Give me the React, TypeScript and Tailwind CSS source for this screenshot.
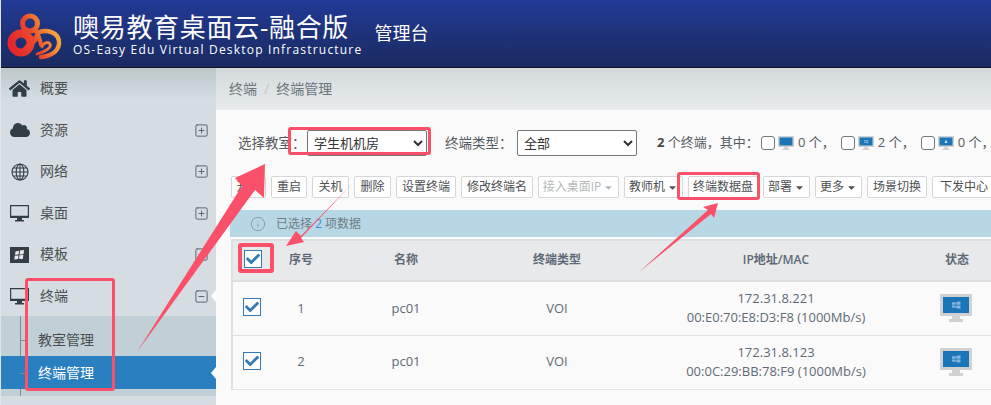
import { FaHome, FaCloud, FaCheck, FaCaretDown } from "react-icons/fa";
import { SquarePlus, SquareMinus, Info } from "lucide-react";
import type { ReactNode } from "react";

const Logo = () => (
  <svg width="66" height="67" viewBox="1 0 66 67" className="shrink-0">
    <defs>
      <linearGradient id="lg" gradientUnits="userSpaceOnUse" x1="12" y1="46" x2="58" y2="24">
        <stop offset="0" stopColor="#e3262c" />
        <stop offset="0.45" stopColor="#ec4a2c" />
        <stop offset="0.72" stopColor="#f28a34" />
        <stop offset="1" stopColor="#f8b545" />
      </linearGradient>
    </defs>
    <g fill="none" stroke="url(#lg)" strokeLinecap="round">
      <circle cx="30" cy="23.5" r="7.5" strokeWidth="5" />
      <circle cx="21" cy="43" r="9.5" strokeWidth="8" />
      <path d="M25 50 L37 37" strokeWidth="6" />
      <path d="M24 29 L30 39" strokeWidth="5" />
      <path d="M37 33 C45 29 60 31 59 44 C58 52 50 56 41 57" strokeWidth="4.5" />
      <path d="M35 30 C38 34 40 38 41 45" strokeWidth="4" />
      <path d="M37 54 C44 52 52 48 50 44 C48 41 43 43 42 47" strokeWidth="2.8" />
    </g>
  </svg>
);

const GlobeIcon = () => (
  <svg width="18" height="18" viewBox="0 0 18 18" fill="none" stroke="#323e46" strokeWidth="1.1">
    <circle cx="9" cy="9" r="8" />
    <ellipse cx="9" cy="9" rx="3.8" ry="8" />
    <path d="M9 1v16M1 9h16M2.2 5h13.6M2.2 13h13.6" />
  </svg>
);

const TemplateIcon = () => (
  <svg width="19" height="16" viewBox="0 0 19 16">
    <rect x="0.75" y="0.75" width="17.5" height="14.5" fill="#3a3f44" stroke="#323e46" strokeWidth="1.5" />
    <path d="M5.5 4.5 9 3.8 8.6 7.5 5 7.8ZM10 3.6 14 2.9 13.5 7.2 9.6 7.5ZM4.8 8.7 8.5 8.4 8.1 12 4.3 12.4ZM9.5 8.3 13.3 8.1 12.8 12 9 11.8Z" fill="#e8ecee" />
  </svg>
);

const MonitorOutline = () => (
  <svg width="19" height="17" viewBox="0 0 19 17">
    <path d="M0 0h19v13H0ZM1.2 1.2v9.6h16.6V1.2Z" fill="#323e46" fillRule="evenodd" />
    <path d="M7 13h5v2h2v1.5H5V15h2Z" fill="#323e46" />
  </svg>
);

type NavItem = { label: string; icon: ReactNode; mark?: "plus" | "minus"; notch?: boolean };

const NAV: NavItem[] = [
  { label: "概要", icon: <FaHome size={21} color="#323e46" /> },
  { label: "资源", icon: <FaCloud size={20} color="#323e46" />, mark: "plus" },
  { label: "网络", icon: <GlobeIcon />, mark: "plus" },
  { label: "桌面", icon: <MonitorOutline />, mark: "plus" },
  { label: "模板", icon: <TemplateIcon />, mark: "plus" },
  { label: "终端", icon: <MonitorOutline />, mark: "minus", notch: true },
];

const Notch = () => (
  <span className="absolute right-0 top-1/2 -translate-y-1/2 border-y-[6px] border-r-[5px] border-y-transparent border-r-white" />
);

const Sidebar = () => (
  <aside className="w-[215px] shrink-0 bg-[linear-gradient(#bdc8cb_0px,#d5dde2_32px)] text-[14px] text-[#4a4f52]">
    {NAV.map((n) => (
      <div key={n.label} className="relative flex h-[41.5px] items-center">
        <span className="flex w-[38px] justify-center pr-[1px]">{n.icon}</span>
        <span className="ml-[1px] flex-1 pb-[2px]">{n.label}</span>
        {n.mark === "plus" && <SquarePlus size={15} color="#555f64" strokeWidth={1.5} className="mr-[7px]" />}
        {n.mark === "minus" && <SquareMinus size={15} color="#555f64" strokeWidth={1.5} className="mr-[7px]" />}
        {n.notch && <Notch />}
      </div>
    ))}
    <div className="relative -mt-px bg-[#c1d0d6] py-[7px]">
      <span className="absolute bottom-0 left-[19px] top-0 w-px bg-[#7d8a90]" />
      <div className="relative flex h-[33px] items-center pl-[37px] text-[#4a4f52]">
        <span className="absolute left-[19px] top-1/2 h-px w-[5px] bg-[#7d8a90]" />
        教室管理
      </div>
      <div className="relative flex h-[33px] items-center bg-[#2a7fc0] pl-[37px] text-white">
        <span className="absolute left-[19px] top-1/2 h-px w-[5px] bg-[#7d8a90]" />
        终端管理
        <Notch />
      </div>
    </div>
  </aside>
);

const Monitor = ({ screen, width, glyph }: { screen: string; width: number; glyph?: ReactNode }) => (
  <svg width={width} viewBox="0 0 32 29" className="shrink-0">
    <rect x="0" y="0" width="32" height="22" fill="#cfd1d2" />
    <rect x="3" y="3" width="26" height="16" fill={screen} />
    <path d="M12 22h8v3h3v3H9v-3h3Z" fill="#cfd1d2" />
    {glyph}
  </svg>
);

const Win = <path d="M12 8.5 15.5 8v2.7H12ZM16.2 7.9 20.5 7.3v3.4h-4.3ZM12 11.4h3.5v2.7L12 13.6ZM16.2 11.4h4.3v3.4l-4.3-.6Z" fill="#7fb5e0" />;

const Box = () => <span className="h-[14px] w-[14px] rounded-[3px] border border-[#777] bg-white" />;

const Check = ({ className = "" }: { className?: string }) => (
  <span className={`flex h-[18px] w-[18px] items-center justify-center border border-[#337ab7] bg-white ${className}`}>
    <FaCheck size={14} color="#337ab7" />
  </span>
);

const Btn = ({ children, w, off, caret }: { children: ReactNode; w: string; off?: boolean; caret?: boolean }) => (
  <span
    className={`flex h-[22px] shrink-0 items-center justify-center gap-[2px] rounded-[2px] border border-[#d4d6d8] bg-white text-[12px] ${off ? "text-[#b4b8bb]" : "text-[#4c4f52]"} ${w}`}
  >
    {children}
    {caret && <FaCaretDown size={11} />}
  </span>
);

const Select = ({ value, w }: { value: string; w: string }) => (
  <select defaultValue={value} className={`h-[26px] shrink-0 rounded-[2px] border border-[#767676] bg-white pl-[2px] text-[13px] text-[#333] ${w}`}>
    <option>{value}</option>
  </select>
);

const Stat = ({ n, screen, glyph }: { n: number; screen: string; glyph?: ReactNode }) => (
  <span className="flex shrink-0 items-center gap-[3px] whitespace-nowrap">
    <Box />
    <Monitor screen={screen} width={16} glyph={glyph} />
    <span className="ml-[1px]">{n} 个，</span>
  </span>
);

const ROWS = [
  { id: 1, ip: "172.31.8.221", mac: "00:E0:70:E8:D3:F8 (1000Mb/s)" },
  { id: 2, ip: "172.31.8.123", mac: "00:0C:29:BB:78:F9 (1000Mb/s)" },
];

const Table = () => (
  <table className="ml-[15px] mt-[2px] w-[765px] table-fixed border-collapse border-l-2 border-[#dfe1e3] text-center text-[13px] text-[#5f6a76]">
    <colgroup>
      <col className="w-[41px]" />
      <col className="w-[56px]" />
      <col className="w-[154px]" />
      <col className="w-[148px]" />
      <col className="w-[290px]" />
      <col className="w-[76px]" />
    </colgroup>
    <thead>
      <tr className="h-[41px] border-y-2 border-[#dcdfe1] bg-[#e7e9eb] text-[12px] font-semibold">
        <th className="p-0"><Check className="ml-[11px] -mt-[3px]" /></th>
        <th className="p-0 pb-[2px] font-semibold">序号</th>
        <th className="p-0 pb-[2px] font-semibold">名称</th>
        <th className="p-0 pb-[2px] font-semibold">终端类型</th>
        <th className="p-0 pb-[2px] font-semibold">IP地址/MAC</th>
        <th className="p-0 pb-[2px] pr-[4px] font-semibold">状态</th>
      </tr>
    </thead>
    <tbody>
      {ROWS.map((r) => (
        <tr key={r.id} className="h-[54px] border-b border-[#dfe1e3]">
          <td className="p-0"><Check className="ml-[10px] -mt-[2px]" /></td>
          <td className="p-0">{r.id}</td>
          <td className="p-0">pc01</td>
          <td className="p-0">VOI</td>
          <td className="p-0 leading-[19px]">
            <div>{r.ip}</div>
            <div>{r.mac}</div>
          </td>
          <td className="p-0 pr-[6px]">
            <div className="flex justify-center"><Monitor screen="#1a76b8" width={32} glyph={Win} /></div>
          </td>
        </tr>
      ))}
    </tbody>
  </table>
);

const Main = () => (
  <main className="min-w-0 flex-1 overflow-hidden bg-[#fafafa] text-[13px] text-[#555c63]">
    <div className="flex h-[42px] items-center gap-[7px] bg-gradient-to-b from-[#d3d9db] to-[#e8ecee] pb-[2px] pl-[13px] text-[14px] text-[#6b747a]">
      <span>终端</span>
      <span className="text-[#c3c8cb]">/</span>
      <span>终端管理</span>
    </div>
    <div className="mt-[20px] flex h-[26px] items-center whitespace-nowrap pl-[22px]">
      <span className="w-[69px] shrink-0 text-[13.5px]">选择教室：</span>
      <Select value="学生机机房" w="w-[120px]" />
      <span className="ml-[18px] w-[72px] shrink-0 text-[13.5px]">终端类型：</span>
      <Select value="全部" w="w-[120px]" />
      <span className="ml-[20px] w-[104px] shrink-0"><b className="text-[#444]">2</b> 个终端，其中：</span>
      <span className="flex shrink-0 gap-[6px]">
        <Stat n={0} screen="#1a76b8" />
        <Stat n={2} screen="#1a76b8" glyph={Win} />
        <Stat n={0} screen="#1a76b8" glyph={<path d="M16 7l3 7h-6Z" fill="#cfe3f3" />} />
      </span>
    </div>
    <div className="mt-[20px] flex gap-[5px] pl-[15px]">
      <Btn w="w-[35px]">开机</Btn>
      <Btn w="w-[36px]">重启</Btn>
      <Btn w="w-[37px]">关机</Btn>
      <Btn w="w-[37px]">删除</Btn>
      <Btn w="w-[60px]">设置终端</Btn>
      <Btn w="w-[72px]">修改终端名</Btn>
      <Btn w="w-[81px]" off caret>接入桌面IP</Btn>
      <Btn w="w-[59px]" caret>教师机</Btn>
      <Btn w="w-[70px]">终端数据盘</Btn>
      <Btn w="w-[47px]" caret>部署</Btn>
      <Btn w="w-[47px]" caret>更多</Btn>
      <Btn w="w-[60px]">场景切换</Btn>
      <Btn w="w-[64px]">下发中心</Btn>
    </div>
    <div className="ml-[14px] mt-[12px] flex h-[27px] items-center bg-[#b7d7e4] pl-[20px] text-[12px] text-[#6f7c84]">
      <Info size={16} color="#8a979e" strokeWidth={1.4} className="mr-[10px]" />
      <span>已选择 <span className="text-[#3a8fd0]">2</span> 项数据</span>
    </div>
    <Table />
  </main>
);

const Annotations = () => (
  <div className="pointer-events-none absolute inset-0">
    <div className="absolute left-[24px] top-[278px] h-[113px] w-[90px] rounded-[3px] border-[3px] border-[#fb5069]" />
    <div className="absolute left-[287px] top-[127px] h-[28px] w-[143px] rounded-[3px] border-[3px] border-[#fb5069]" />
    <div className="absolute left-[237px] top-[243px] h-[30px] w-[36px] rounded-[3px] border-[4px] border-[#fb5069]" />
    <div className="absolute left-[676px] top-[172px] h-[28px] w-[83px] rounded-[3px] border-[3px] border-[#fb5069]" />
    <svg width="991" height="405" className="absolute -left-px top-0">
      <polygon points="137,352 242,186 235,178 265,164 264,198 255,190" fill="#fb5069" />
      <polygon points="352,184 301,236 296,231 286,246 304,242 301,238" fill="#fb5069" />
      <polygon points="639,272 708,210 703,207 718,203 714,218 711,214" fill="#fb5069" />
    </svg>
  </div>
);

export default function App() {
  return (
    <div
      className="relative flex h-[405px] w-[991px] flex-col overflow-hidden border-l border-[#dfe3ea] bg-[#fafafa]"
      style={{ fontFamily: '"Open Sans","Noto Sans CJK SC",sans-serif' }}
    >
      <header className="flex h-[68px] shrink-0 border-b border-[#10151f] bg-gradient-to-b from-[#223a96] to-[#1a2a60] text-white">
        <Logo />
        <div className="ml-[6px] mt-[11px] leading-none">
          <div className="whitespace-nowrap text-[26px] leading-[32px] tracking-[0.7px]">噢易教育桌面云-融合版</div>
          <div className="whitespace-nowrap text-[12px] leading-[14px] tracking-[1.2px]">OS-Easy Edu Virtual Desktop Infrastructure</div>
        </div>
        <div className="ml-[12px] mt-[21px] text-[18px] leading-[24px]">管理台</div>
      </header>
      <div className="flex min-h-0 flex-1">
        <Sidebar />
        <Main />
      </div>
      <Annotations />
    </div>
  );
}
